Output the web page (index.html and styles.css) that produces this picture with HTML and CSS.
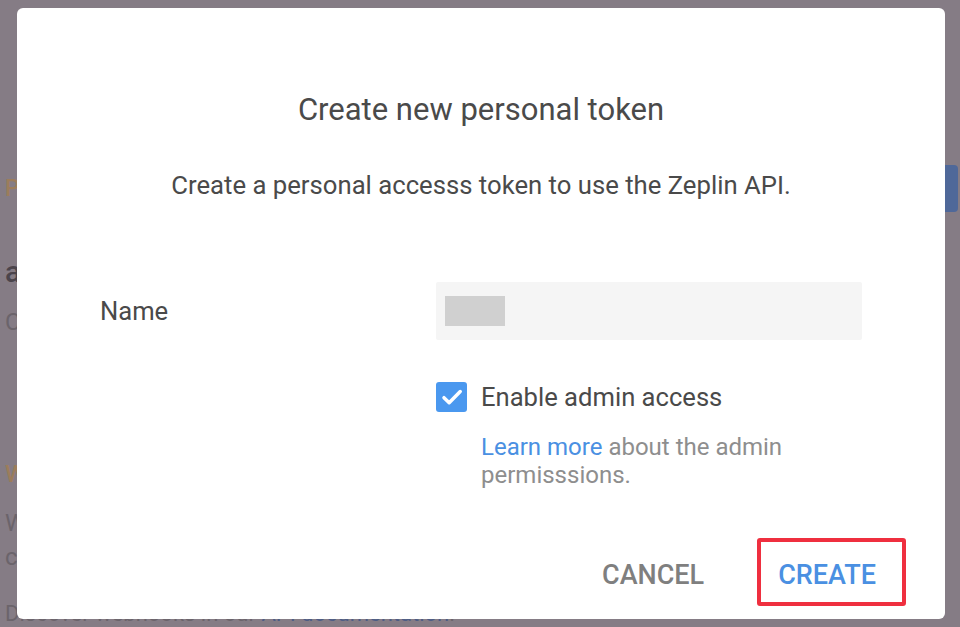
FILE: index.html
```html
<!DOCTYPE html>
<html lang="en">
<head>
<meta charset="utf-8">
<title>Create new personal token</title>
<link rel="stylesheet" href="styles.css">
</head>
<body>
<main class="page">
  <div class="section-head">
    <h2 class="section-title orange">Personal access tokens</h2>
    <button class="bg-btn">Generate new token</button>
  </div>
  <div class="token">
    <div class="token-name">api-token</div>
    <div class="token-meta">Created on May 12, 2020</div>
  </div>
  <h2 class="section-title orange webhooks">Webhooks</h2>
  <p class="para">Webhooks let you receive notifications about your projects<br>
    connected to Zeplin.</p>
  <p class="para discover">Discover webhooks in our <span class="bg-link">API documentation</span>.</p>
</main>

<div class="dialog" role="dialog" aria-labelledby="dlg-title">
  <h1 class="dlg-title" id="dlg-title">Create new personal token</h1>
  <p class="dlg-sub">Create a personal accesss token to use the Zeplin API.</p>
  <div class="form-row">
    <label class="form-label" for="token-name">Name</label>
    <div class="input" id="token-name">
      <span class="redacted"></span>
    </div>
  </div>
  <div class="check-row">
    <span class="checkbox">
      <svg viewBox="0 0 24 24" width="26" height="26"><path d="M4.6 12.6l4.8 4.7L19.6 7" fill="none" stroke="#fff" stroke-width="3.2" stroke-linecap="round" stroke-linejoin="round"/></svg>
    </span>
    <span class="check-label">Enable admin access</span>
  </div>
  <p class="helper"><span class="link">Learn more</span> about the admin permisssions.</p>
  <div class="footer">
    <button class="btn btn-cancel">CANCEL</button>
    <button class="btn btn-create">CREATE</button>
  </div>
</div>
</body>
</html>
```

FILE: styles.css
```css
* { box-sizing: border-box; }
html, body { margin: 0; padding: 0; }
body {
  width: 960px;
  height: 627px;
  overflow: hidden;
  background: #857c85;
  font-family: Roboto, "Liberation Sans", sans-serif;
}
.page {
  padding: 165px 2px 0 5px;
}
.section-head {
  display: flex;
  justify-content: space-between;
  align-items: center;
  height: 47px;
}
.section-title {
  margin: 0;
  font-size: 23px;
  font-weight: 500;
}
.orange { color: #9c7d5b; }
.bg-btn {
  width: 200px;
  height: 47px;
  border: 0;
  border-radius: 4px;
  background: #4f6899;
  color: #c7ccd8;
  font: 500 16px Roboto, sans-serif;
}
.token { margin-top: 40px; }
.token-name {
  font-size: 30px;
  font-weight: 500;
  color: #4b444b;
  line-height: 40px;
}
.token-meta {
  margin-top: 14px;
  font-size: 24px;
  color: #6b646b;
  line-height: 32px;
}
.webhooks { margin-top: 122px; line-height: 28px; font-size: 24px; }
.para {
  margin: 18px 0 0;
  font-size: 24px;
  line-height: 34px;
  color: #6b646b;
}
.discover { margin-top: 23px; font-size: 22px; }
.bg-link { color: #4d5d85; }

.dialog {
  position: fixed;
  left: 17px;
  top: 8px;
  width: 928px;
  height: 611px;
  background: #fff;
  border-radius: 6px;
  display: flex;
  flex-direction: column;
  padding: 84px 83px 13px;
  color: #4a4a4a;
}
.dlg-title {
  margin: 0;
  text-align: center;
  font-size: 31px;
  font-weight: 400;
  line-height: 36px;
}
.dlg-sub {
  margin: 42px 0 0;
  text-align: center;
  font-size: 25.7px;
  line-height: 30px;
}
.form-row {
  display: flex;
  align-items: center;
  margin-top: 82px;
}
.form-label {
  width: 336px;
  font-size: 25.6px;
  color: #4a4a4a;
}
.input {
  flex: 1;
  height: 58px;
  background: #f5f5f5;
  border-radius: 2px;
  display: flex;
  align-items: center;
  padding-left: 9px;
}
.redacted {
  width: 60px;
  height: 30px;
  background: #d0d0d0;
}
.check-row {
  display: flex;
  align-items: center;
  margin-top: 42px;
  margin-left: 336px;
  height: 30px;
}
.checkbox {
  width: 31px;
  height: 30px;
  border-radius: 3px;
  background: #4a98ef;
  display: flex;
  align-items: center;
  justify-content: center;
}
.check-label {
  margin-left: 14px;
  font-size: 25.6px;
}
.helper {
  margin: 21px 0 0 381px;
  font-size: 24px;
  line-height: 28px;
  color: #8e8e8e;
}
.link { color: #4a90e2; }
.footer {
  margin-top: auto;
  display: flex;
  justify-content: flex-end;
  align-items: center;
  margin-right: -44px;
}
.btn {
  border: 0;
  background: none;
  font-family: Roboto, "Liberation Sans", sans-serif;
  font-weight: 500;
  font-size: 27px;
  height: 68px;
  padding: 5px 0 0;
}
.btn-cancel {
  color: #7f7f7f;
  margin-right: 53px;
}
.btn-create {
  color: #4a90e2;
  border: 4px solid #ef2f3f;
  border-radius: 3px;
  padding: 5px 26px 0 17px;
}
```
